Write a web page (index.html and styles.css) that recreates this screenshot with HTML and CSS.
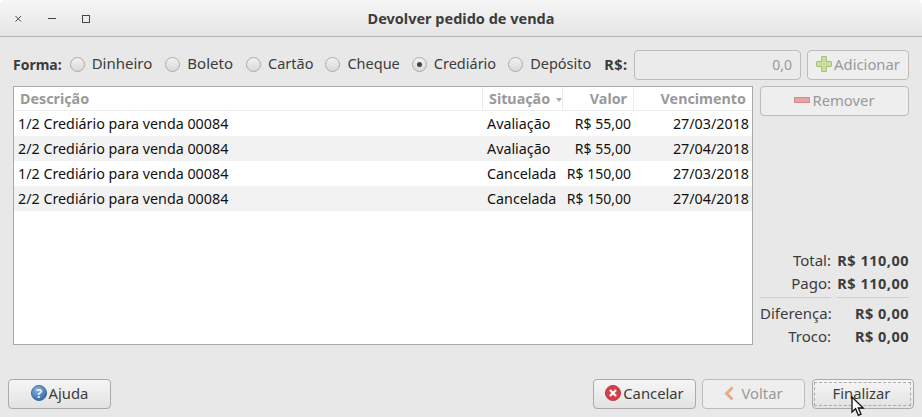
FILE: index.html
```html
<!DOCTYPE html>
<html lang="pt-BR">
<head>
    <meta charset="UTF-8">
    <title>Devolver pedido de venda</title>
    <link rel="stylesheet" href="styles.css">
</head>
<body>
    <div class="window">
        <div class="titlebar">
            <div class="win-controls">
                <svg width="9" height="10" viewBox="0 0 9 10"><path d="M1.5 3l5.5 5.5M7 3l-5.5 5.5" stroke="#444" stroke-width="1" fill="none"/></svg>
                <svg width="9" height="10" viewBox="0 0 9 10"><path d="M0 5.5h8" stroke="#444" stroke-width="1" fill="none"/></svg>
                <svg width="9" height="10" viewBox="0 0 9 10"><rect x="0.5" y="2.5" width="7" height="7" stroke="#444" stroke-width="1" fill="none"/></svg>
            </div>
            <div class="win-title">Devolver pedido de venda</div>
        </div>

        <div class="content">
            <div class="form-row">
                <span class="bold-label">Forma:</span>
                <label class="radio"><span class="radio-mark"></span>Dinheiro</label>
                <label class="radio"><span class="radio-mark"></span>Boleto</label>
                <label class="radio tight"><span class="radio-mark"></span>Cartão</label>
                <label class="radio tight"><span class="radio-mark"></span>Cheque</label>
                <label class="radio tight"><span class="radio-mark checked"></span>Crediário</label>
                <label class="radio tight"><span class="radio-mark"></span>Depósito</label>
                <span class="bold-label currency">R$:</span>
                <div class="value-input">0,0</div>
                <button class="btn btn-side" disabled>
                    <svg class="btn-icon" width="16" height="16" viewBox="0 0 16 16"><path d="M5.5 0.5h5v5h5v5h-5v5h-5v-5h-5v-5h5z" fill="#c8dc9c" stroke="#a8c27a"/></svg>Adicionar
                </button>
            </div>

            <div class="main-row">
                <div class="table-box">
                    <div class="table-row table-head">
                        <div class="col-desc">Descrição</div>
                        <div class="col-sit">Situação<span class="sort-arrow"></span></div>
                        <div class="col-val">Valor</div>
                        <div class="col-due">Vencimento</div>
                    </div>
                    <div class="table-row">
                        <div class="col-desc">1/2 Crediário para venda 00084</div>
                        <div class="col-sit">Avaliação</div>
                        <div class="col-val">R$ 55,00</div>
                        <div class="col-due">27/03/2018</div>
                    </div>
                    <div class="table-row alt">
                        <div class="col-desc">2/2 Crediário para venda 00084</div>
                        <div class="col-sit">Avaliação</div>
                        <div class="col-val">R$ 55,00</div>
                        <div class="col-due">27/04/2018</div>
                    </div>
                    <div class="table-row">
                        <div class="col-desc">1/2 Crediário para venda 00084</div>
                        <div class="col-sit">Cancelada</div>
                        <div class="col-val">R$ 150,00</div>
                        <div class="col-due">27/03/2018</div>
                    </div>
                    <div class="table-row alt">
                        <div class="col-desc">2/2 Crediário para venda 00084</div>
                        <div class="col-sit">Cancelada</div>
                        <div class="col-val">R$ 150,00</div>
                        <div class="col-due">27/04/2018</div>
                    </div>
                </div>

                <div class="side">
                    <button class="btn btn-remove" disabled>
                        <svg class="btn-icon" width="16" height="6" viewBox="0 0 16 6"><rect x="0.5" y="0.5" width="15" height="5" fill="#e5a3a3" stroke="#d08c8c"/></svg>Remover
                    </button>
                    <div class="summary">
                        <span class="sum-label">Total:</span><span class="sum-value">R$ 110,00</span>
                        <span class="sum-label">Pago:</span><span class="sum-value">R$ 110,00</span>
                        <span class="sum-sep"></span><span class="sum-sep"></span>
                        <span class="sum-label">Diferença:</span><span class="sum-value">R$ 0,00</span>
                        <span class="sum-label">Troco:</span><span class="sum-value">R$ 0,00</span>
                    </div>
                </div>
            </div>
        </div>

        <div class="footer">
            <button class="btn btn-foot">
                <svg class="btn-icon" width="16" height="16" viewBox="0 0 16 16"><defs><radialGradient id="help-bg" cx="40%" cy="30%" r="75%"><stop offset="0" stop-color="#8db4dc"/><stop offset="1" stop-color="#2c65a3"/></radialGradient></defs><circle cx="8" cy="8" r="7.6" fill="url(#help-bg)" stroke="#2d5f98" stroke-width="0.8"/><text x="8" y="13" text-anchor="middle" class="help-mark">?</text></svg>Ajuda
            </button>
            <div class="footer-right">
                <button class="btn btn-foot">
                    <svg class="btn-icon" width="16" height="16" viewBox="0 0 16 16"><circle cx="8" cy="8" r="7.6" fill="#d63f48" stroke="#b32d35" stroke-width="0.8"/><path d="M5 5l6 6M11 5l-6 6" stroke="#fff" stroke-width="2.4" fill="none"/></svg>Cancelar
                </button>
                <button class="btn btn-foot" disabled>
                    <svg class="back-icon" width="11" height="15" viewBox="0 0 11 15"><path d="M8.5 1.5L2.5 7.5l6 6" stroke="#e3ad8c" stroke-width="3" fill="none"/></svg>Voltar
                </button>
                <button class="btn btn-foot btn-focus"><span class="focus-ring">Finalizar</span></button>
            </div>
        </div>

        <svg class="cursor" width="14" height="21" viewBox="0 0 14 21"><path d="M1 1v15l3.6-3.3 2.8 6.6 2.6-1.1-2.7-6.2h4.9z" fill="#fff" stroke="#111" stroke-width="1.3"/></svg>
    </div>
</body>
</html>
```

FILE: styles.css
```css
body {
    margin: 0;
    background: #fff;
    font-family: "Noto Sans", sans-serif;
    font-size: 15px;
    color: #3c3c3c;
}

.window {
    position: relative;
    width: 922px;
    height: 417px;
    display: flex;
    flex-direction: column;
    background-color: #e8e8e8;
    border-radius: 6px 6px 0 0;
    overflow: hidden;
}

.titlebar {
    position: relative;
    height: 36px;
    display: flex;
    align-items: center;
    justify-content: center;
    background: linear-gradient(#f6f6f6, #e5e5e5);
    border-bottom: 1px solid #b4b4b4;
}

.win-controls {
    position: absolute;
    left: 14px;
    top: 13px;
    display: flex;
    gap: 25px;
}

.win-title {
    font-weight: bold;
    font-size: 14.5px;
    color: #3c3c3c;
}

.content {
    flex: 1;
    padding: 13px 13px 0;
    display: flex;
    flex-direction: column;
    gap: 6px;
}

.form-row {
    height: 30px;
    display: flex;
    align-items: center;
}

.bold-label {
    font-weight: bold;
    font-size: 14px;
    margin-right: 8px;
    padding-bottom: 2px;
}

.radio {
    display: flex;
    align-items: center;
    gap: 7px;
    margin-right: 13px;
    padding-bottom: 5px;
}

.radio.tight {
    margin-right: 12px;
    font-size: 14.5px;
}

.radio-mark {
    box-sizing: border-box;
    width: 15px;
    height: 15px;
    margin-top: 3px;
    border: 1px solid #aaa;
    border-radius: 50%;
    background: linear-gradient(#f2f2f2, #d9d9d9);
    display: flex;
    align-items: center;
    justify-content: center;
}

.radio-mark.checked::after {
    content: "";
    width: 5px;
    height: 5px;
    border-radius: 50%;
    background-color: #444;
}

.currency {
    margin-left: 1px;
    margin-right: 6px;
    font-size: 14.5px;
    letter-spacing: 0.5px;
}

.value-input {
    box-sizing: border-box;
    flex: 1;
    min-width: 0;
    height: 30px;
    padding: 0 8px;
    border: 1px solid #bcbcbc;
    border-radius: 4px;
    background-color: #ebebeb;
    color: #999;
    font-size: 14px;
    text-align: right;
    line-height: 27px;
}

.btn {
    box-sizing: border-box;
    display: flex;
    align-items: center;
    justify-content: center;
    padding: 0 0 2px;
    height: 30px;
    border: 1px solid #aaa;
    border-radius: 4px;
    background: linear-gradient(#f6f6f6, #e2e2e2);
    font-family: inherit;
    font-size: 14.8px;
    color: #3c3c3c;
}

.btn:disabled {
    border-color: #bcbcbc;
    background: #eeeeee;
    color: #999;
}

.btn-icon {
    margin-right: 2px;
}

.btn-side {
    flex: none;
    width: 102px;
    margin-left: 6px;
}

.main-row {
    display: flex;
    gap: 7px;
}

.table-box {
    box-sizing: border-box;
    width: 740px;
    height: 259px;
    border: 1px solid #aaa;
    background-color: #fff;
    color: #111;
    font-size: 14.3px;
}

.table-row {
    height: 25px;
    display: flex;
    align-items: center;
}

.table-row > div {
    box-sizing: border-box;
    white-space: nowrap;
}

.table-row.alt {
    background-color: #f2f2f2;
}

.table-head {
    box-sizing: border-box;
    height: 24px;
    border-bottom: 1px solid #ececec;
    font-weight: bold;
    color: #999;
}

.col-desc {
    width: 469px;
    padding-left: 4px;
}

.col-sit {
    width: 80px;
    padding-left: 4px;
}

.col-val {
    width: 71px;
    padding-right: 3px;
    font-size: 14px;
    text-align: right;
}

.col-due {
    width: 118px;
    padding-right: 3px;
    text-align: right;
}

.table-row.table-head > div {
    height: 23px;
    line-height: 23px;
    border-right: 1px solid #ececec;
}

.table-head .col-desc {
    padding-left: 6px;
}

.table-head .col-sit {
    padding-left: 6px;
}

.table-head .col-val {
    padding-right: 6px;
    font-size: 14.3px;
}

.table-row.table-head .col-due {
    border-right: none;
    padding-right: 6px;
}

.sort-arrow {
    display: inline-block;
    margin-left: 6px;
    vertical-align: middle;
    border-left: 3px solid transparent;
    border-right: 3px solid transparent;
    border-top: 4px solid #aaa;
}

.side {
    width: 149px;
    height: 260px;
    display: flex;
    flex-direction: column;
    justify-content: space-between;
}

.btn-remove {
    width: 100%;
}

.summary {
    display: grid;
    grid-template-columns: 71px 72px;
    column-gap: 6px;
    row-gap: 3px;
    line-height: 20px;
}

.sum-label {
    text-align: right;
    white-space: nowrap;
}

.sum-value {
    text-align: right;
    white-space: nowrap;
    font-weight: bold;
    font-size: 14.5px;
    letter-spacing: 0.5px;
}

.sum-sep {
    height: 1px;
    margin: 1px 0 2px;
    background-color: #cfcfcf;
}

.footer {
    height: 38px;
    padding: 0 8px;
    display: flex;
    justify-content: space-between;
}

.footer-right {
    display: flex;
    gap: 6px;
}

.btn-foot {
    width: 103px;
}

.back-icon {
    margin-right: 6px;
}

.btn-focus {
    width: 102px;
    margin-left: 1px;
    padding: 2px 2px 2px 1px;
}

.focus-ring {
    flex: 1;
    align-self: stretch;
    display: flex;
    align-items: center;
    justify-content: center;
    padding: 0 2px 2px 0;
    border: 1px dashed #aaa;
}

.help-mark {
    font-family: "Noto Sans", sans-serif;
    font-size: 13px;
    font-weight: bold;
    fill: #e8f0f8;
}

.cursor {
    position: absolute;
    left: 851px;
    top: 396px;
}
```
